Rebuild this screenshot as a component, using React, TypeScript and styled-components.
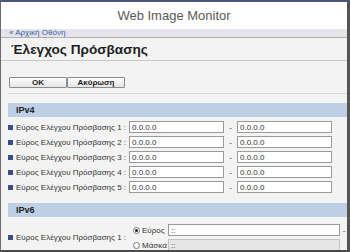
import React from "react";
import styled, { createGlobalStyle } from "styled-components";

const GlobalStyle = createGlobalStyle`
  html, body {
    margin: 0;
    padding: 0;
    background: #ffffff;
  }
  * {
    box-sizing: border-box;
  }
`;

const Frame = styled.div`
  width: 350px;
  height: 252px;
  overflow: hidden;
  background: #f3f3f3;
  border-top: 2px solid #4b5680;
  border-left: 1px solid #6a6a6a;
  border-right: 3px solid #545454;
  border-bottom: 2px solid #4a4a4a;
  font-family: "Liberation Sans", Arial, sans-serif;
  display: flex;
  flex-direction: column;
`;

const Header = styled.div`
  height: 27px;
  flex: none;
  background: #ffffff;
  display: flex;
  align-items: center;
  justify-content: center;
  color: #5a5a5a;
  font-size: 13px;
`;

const Breadcrumb = styled.div`
  height: 8px;
  flex: none;
  background: #e4e4ea;
  padding-left: 8px;
  display: flex;
  align-items: center;
`;

const HomeLink = styled.a`
  color: #3a5aa8;
  font-size: 8px;
  line-height: 8px;
  text-decoration: none;
`;

const TitleBar = styled.div`
  height: 24px;
  flex: none;
  border-top: 1px solid #b0b0b0;
  border-bottom: 1px solid #c8c8c8;
  padding-left: 10px;
  display: flex;
  align-items: center;
`;

const Title = styled.h1`
  margin: 0;
  font-size: 13.6px;
  font-weight: bold;
  color: #1e1e1e;
`;

const Content = styled.div`
  padding-left: 7px;
  display: flex;
  flex-direction: column;
`;

const ButtonRow = styled.div`
  display: flex;
  margin-top: 16px;
  padding-left: 1px;
`;

const Button = styled.button`
  width: 58px;
  height: 11px;
  padding: 0;
  border: 1px solid #8c8c8c;
  border-radius: 1px;
  background: linear-gradient(#ffffff, #e4e4e4);
  font-family: "Liberation Sans", Arial, sans-serif;
  font-size: 8px;
  font-weight: bold;
  color: #1e1e1e;
  line-height: 9px;
`;

const Divider = styled.div`
  height: 1px;
  background: #d6d6d6;
  margin-top: 5px;
`;

const SectionBar = styled.div<{ $gap: number }>`
  height: 14px;
  margin-top: ${(p) => p.$gap}px;
  background: #bfd0e6;
  padding-left: 8px;
  display: flex;
  align-items: center;
  font-size: 9px;
  font-weight: bold;
  color: #222222;
`;

const Rows = styled.div`
  display: flex;
  flex-direction: column;
  gap: 3px;
  padding-top: 4px;
`;

const Row = styled.div`
  display: flex;
  align-items: center;
  height: 12px;
`;

const Bullet = styled.span`
  width: 5px;
  height: 5px;
  flex: none;
  background: #3b4f86;
  margin-right: 3px;
`;

const Label = styled.span<{ $width: number }>`
  width: ${(p) => p.$width}px;
  flex: none;
  font-size: 8px;
  color: #333333;
  white-space: nowrap;
`;

const TextInput = styled.input<{ $width: number }>`
  width: ${(p) => p.$width}px;
  height: 12px;
  flex: none;
  border: 1px solid #9a9a9a;
  background: #ffffff;
  padding: 0 2px;
  font-family: "Liberation Sans", Arial, sans-serif;
  font-size: 8px;
  color: #333333;
  &:disabled {
    background: #e6e6e6;
    border-color: #c4c4c4;
  }
`;

const Dash = styled.span<{ $width: number }>`
  width: ${(p) => p.$width}px;
  flex: none;
  text-align: center;
  font-size: 8px;
  color: #333333;
`;

const V6Row = styled.div`
  display: flex;
  align-items: center;
  margin-top: 7px;
`;

const RadioStack = styled.div`
  display: flex;
  flex-direction: column;
  gap: 3px;
`;

const RadioLine = styled.label`
  display: flex;
  align-items: center;
  height: 12px;
  font-size: 8px;
  color: #333333;
`;

const RadioDot = styled.span<{ $on: boolean }>`
  width: 7px;
  height: 7px;
  flex: none;
  border-radius: 50%;
  border: 1px solid #7a7a7a;
  background: #ffffff;
  margin-right: 2px;
  display: flex;
  align-items: center;
  justify-content: center;
  &::after {
    content: "";
    width: 3px;
    height: 3px;
    border-radius: 50%;
    background: ${(p) => (p.$on ? "#222222" : "transparent")};
  }
`;

const RadioText = styled.span`
  width: 26px;
`;

const ipv4 = [1, 2, 3, 4, 5];

export default function App() {
  return (
    <>
      <GlobalStyle />
      <Frame>
        <Header>Web Image Monitor</Header>
        <Breadcrumb>
          <HomeLink href="#">« Αρχική Οθόνη</HomeLink>
        </Breadcrumb>
        <TitleBar>
          <Title>Έλεγχος Πρόσβασης</Title>
        </TitleBar>
        <Content>
          <ButtonRow>
            <Button>OK</Button>
            <Button>Ακύρωση</Button>
          </ButtonRow>
          <Divider />
          <SectionBar $gap={9}>IPv4</SectionBar>
          <Rows>
            {ipv4.map((n) => (
              <Row key={n}>
                <Bullet />
                <Label $width={113}>Εύρος Ελέγχου Πρόσβασης {n} :</Label>
                <TextInput $width={95} defaultValue="0.0.0.0" />
                <Dash $width={13}>-</Dash>
                <TextInput $width={95} defaultValue="0.0.0.0" />
              </Row>
            ))}
          </Rows>
          <SectionBar $gap={10}>IPv6</SectionBar>
          <V6Row>
            <Bullet />
            <Label $width={117}>Εύρος Ελέγχου Πρόσβασης 1 :</Label>
            <RadioStack>
              <Row>
                <RadioLine>
                  <RadioDot $on={true} />
                  <RadioText>Εύρος</RadioText>
                </RadioLine>
                <TextInput $width={172} defaultValue="::" />
                <Dash $width={8}>-</Dash>
              </Row>
              <Row>
                <RadioLine>
                  <RadioDot $on={false} />
                  <RadioText>Μάσκα</RadioText>
                </RadioLine>
                <TextInput $width={172} defaultValue="::" disabled />
              </Row>
            </RadioStack>
          </V6Row>
        </Content>
      </Frame>
    </>
  );
}
